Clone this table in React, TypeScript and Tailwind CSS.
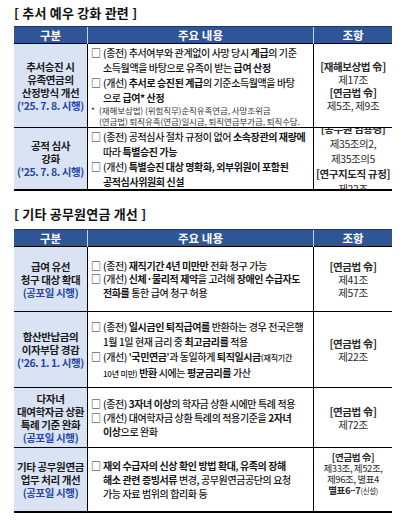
import React from "react";

const B = ({ children }: { children: React.ReactNode }) => (
  <span className="font-bold">{children}</span>
);

const S = ({ children }: { children: React.ReactNode }) => (
  <span className="text-[8px] tracking-[-0.2px]">{children}</span>
);

function Bullet({
  lines,
  lh,
  mark = "□",
}: {
  lines: React.ReactNode[];
  lh: string;
  mark?: string;
}) {
  return (
    <div className="flex">
      <span className={`w-[12px] shrink-0 ${lh}`}>{mark}</span>
      <div className="flex flex-col">
        {lines.map((l, i) => (
          <div key={i} className={`whitespace-nowrap ${lh}`}>
            {l}
          </div>
        ))}
      </div>
    </div>
  );
}

function Header() {
  return (
    <div className="grid grid-cols-[73px_226px_79px] h-[17px] bg-[#2f5597] border-t border-[#1f3864] text-white font-bold text-[11.5px]">
      <div className="flex items-center justify-center">구분</div>
      <div className="flex items-center justify-center border-l border-[#c5d2ea]">주요 내용</div>
      <div className="flex items-center justify-center border-l border-[#c5d2ea]">조항</div>
    </div>
  );
}

function Row({
  h,
  left,
  mid,
  right,
  last,
  rightClass = "",
}: {
  h: string;
  left: React.ReactNode;
  mid: React.ReactNode;
  right: React.ReactNode;
  last?: boolean;
  rightClass?: string;
}) {
  return (
    <div
      className={`grid grid-cols-[73px_226px_79px] ${h} border-t border-black ${
        last ? "border-b-2" : ""
      }`}
    >
      <div className="bg-[#dae3f3] flex flex-col items-center justify-center text-center font-bold text-[10.5px] leading-[13px] tracking-[-0.4px] text-[#1b1b1b] overflow-hidden">
        {left}
      </div>
      <div className="border-l border-black flex flex-col justify-center pl-[3px] text-[10px] font-medium tracking-[-0.4px] text-[#141414] overflow-hidden">
        {mid}
      </div>
      <div
        className={`border-l border-black flex flex-col items-center justify-center text-center tracking-[-0.4px] text-[#2a2a2a] overflow-hidden ${rightClass}`}
      >
        {right}
      </div>
    </div>
  );
}

const Blue = ({ children }: { children: React.ReactNode }) => (
  <div className="text-[#2747a6]">{children}</div>
);

export default function App() {
  return (
    <div
      className="w-[405px] h-[524px] bg-white overflow-hidden"
      style={{ fontFamily: "'Noto Sans CJK KR', 'Noto Sans', sans-serif" }}
    >
      <div className="ml-[14px] w-[378px] pt-[5px]">
        <div className="text-[13px] font-bold leading-[16px] text-[#111] tracking-[0.2px] whitespace-pre">
          [ 추서 예우 강화 관련 ]
        </div>
        <div className="mt-[5px]">
          <Header />
          <Row
            h="h-[84px]"
            left={
              <>
                <div>추서승진 시</div>
                <div>유족연금의</div>
                <div>산정방식 개선</div>
                <Blue>('25. 7. 8. 시행)</Blue>
              </>
            }
            mid={
              <>
                <Bullet
                  lh="leading-[15px]"
                  lines={[
                    <>(종전) 추서여부와 관계없이 사망 당시 <B>계급</B>의 기준</>,
                    <>소득월액을 바탕으로 유족이 받는 <B>급여 산정</B></>,
                  ]}
                />
                <Bullet
                  lh="leading-[15px]"
                  lines={[
                    <>(개선) <B>추서로 승진된 계급</B>의 기준소득월액을 바탕</>,
                    <>으로 <B>급여* 산정</B></>,
                  ]}
                />
                <div className="flex text-[8.5px] font-normal tracking-[-0.1px] text-[#333]">
                  <span className="w-[8px] shrink-0 leading-[11px]">*</span>
                  <div>
                    <div className="whitespace-nowrap leading-[11px]">
                      (재해보상법) (위험직무)순직유족연금, 사망조위금
                    </div>
                    <div className="whitespace-nowrap leading-[11px]">
                      (연금법) 퇴직유족(연금)일시금, 퇴직연금부가금, 퇴직수당.
                    </div>
                  </div>
                </div>
              </>
            }
            rightClass="text-[10.5px] leading-[13px]"
            right={
              <>
                <div className="font-bold whitespace-nowrap">[재해보상법 令]</div>
                <div>제17조</div>
                <div className="font-bold whitespace-nowrap">[연금법 令]</div>
                <div>제5조, 제9조</div>
              </>
            }
          />
          <Row
            h="h-[64px]"
            last
            left={
              <>
                <div>공적 심사</div>
                <div>강화</div>
                <Blue>('25. 7. 8. 시행)</Blue>
              </>
            }
            mid={
              <>
                <Bullet
                  lh="leading-[15px]"
                  lines={[
                    <>(종전) 공적심사 절차 규정이 없어 <B>소속장관의 재량에</B></>,
                    <>따라 <B>특별승진 가능</B></>,
                  ]}
                />
                <Bullet
                  lh="leading-[15px]"
                  lines={[
                    <>(개선) <B>특별승진 대상 명확화</B>, <B>외부위원이 포함된</B></>,
                    <><B>공적심사위원회 신설</B></>,
                  ]}
                />
              </>
            }
            rightClass="text-[10.5px] leading-[15px]"
            right={
              <>
                <div className="font-bold whitespace-nowrap">[공무원 임용령]</div>
                <div>제35조의2,</div>
                <div>제35조의5</div>
                <div className="font-bold whitespace-nowrap">[연구지도직 규정]</div>
                <div>제22조</div>
              </>
            }
          />
        </div>

        <div className="mt-[15px] text-[13px] font-bold leading-[16px] text-[#111] tracking-[0.2px] whitespace-pre">
          [ 기타 공무원연금 개선 ]
        </div>
        <div className="mt-[7px]">
          <Header />
          <Row
            h="h-[65px]"
            left={
              <>
                <div>급여 유선</div>
                <div>청구 대상 확대</div>
                <Blue>(공포일 시행)</Blue>
              </>
            }
            mid={
              <>
                <Bullet
                  lh="leading-[13.5px]"
                  lines={[<>(종전) <B>재직기간 4년 미만만</B> 전화 청구 가능</>]}
                />
                <Bullet
                  lh="leading-[13.5px]"
                  lines={[
                    <>(개선) <B>신체·물리적 제약</B>을 고려해 <B>장애인 수급자도</B></>,
                    <><B>전화를</B> 통한 급여 청구 허용</>,
                  ]}
                />
              </>
            }
            rightClass="text-[10.5px] leading-[13px]"
            right={
              <>
                <div className="font-bold whitespace-nowrap">[연금법 令]</div>
                <div>제41조</div>
                <div>제57조</div>
              </>
            }
          />
          <Row
            h="h-[76px]"
            left={
              <>
                <div>합산반납금의</div>
                <div>이자부담 경감</div>
                <Blue>('26. 1. 1. 시행)</Blue>
              </>
            }
            mid={
              <>
                <Bullet
                  lh="leading-[15px]"
                  lines={[
                    <>(종전) <B>일시금인 퇴직급여를</B> 반환하는 경우 전국은행</>,
                    <>1월 1일 현재 금리 중 <B>최고금리를</B> 적용</>,
                  ]}
                />
                <Bullet
                  lh="leading-[15px]"
                  lines={[
                    <>(개선) '<B>국민연금</B>'과 동일하게 <B>퇴직일시금</B><S>(재직기간</S></>,
                    <><S>10년 미만)</S> <B>반환</B> 시에는 <B>평균금리를</B> 가산</>,
                  ]}
                />
              </>
            }
            rightClass="text-[10.5px] leading-[13px]"
            right={
              <>
                <div className="font-bold whitespace-nowrap">[연금법 令]</div>
                <div>제22조</div>
              </>
            }
          />
          <Row
            h="h-[60px]"
            left={
              <>
                <div>다자녀</div>
                <div>대여학자금 상환</div>
                <div>특례 기준 완화</div>
                <Blue>(공포일 시행)</Blue>
              </>
            }
            mid={
              <>
                <Bullet
                  lh="leading-[14px]"
                  lines={[<>(종전) <B>3자녀 이상</B>의 학자금 상환 시에만 특례 적용</>]}
                />
                <Bullet
                  lh="leading-[14px]"
                  lines={[
                    <>(개선) 대여학자금 상환 특례의 적용기준을 <B>2자녀</B></>,
                    <><B>이상</B>으로 완화</>,
                  ]}
                />
              </>
            }
            rightClass="text-[10.5px] leading-[13px]"
            right={
              <>
                <div className="font-bold whitespace-nowrap">[연금법 令]</div>
                <div>제72조</div>
              </>
            }
          />
          <Row
            h="h-[66px]"
            last
            left={
              <>
                <div className="whitespace-nowrap">기타 공무원연금</div>
                <div>업무 처리 개선</div>
                <Blue>(공포일 시행)</Blue>
              </>
            }
            mid={
              <>
                <Bullet
                  lh="leading-[14px]"
                  lines={[
                    <><B>재외 수급자의 신상 확인 방법 확대</B>, <B>유족의 장해</B></>,
                    <><B>해소 관련 증빙서류</B> 변경, 공무원연금공단의 요청</>,
                    <>가능 자료 범위의 합리화 등</>,
                  ]}
                />
              </>
            }
            rightClass="text-[9.5px] leading-[11px] pb-[12px]"
            right={
              <>
                <div className="font-bold whitespace-nowrap">[연금법 令]</div>
                <div className="whitespace-nowrap">제33조, 제52조,</div>
                <div className="whitespace-nowrap">제96조, 별표4</div>
                <div className="whitespace-nowrap font-bold">
                  별표6~7<span className="text-[7.5px] font-normal">(신설)</span>
                </div>
              </>
            }
          />
        </div>
      </div>
    </div>
  );
}
